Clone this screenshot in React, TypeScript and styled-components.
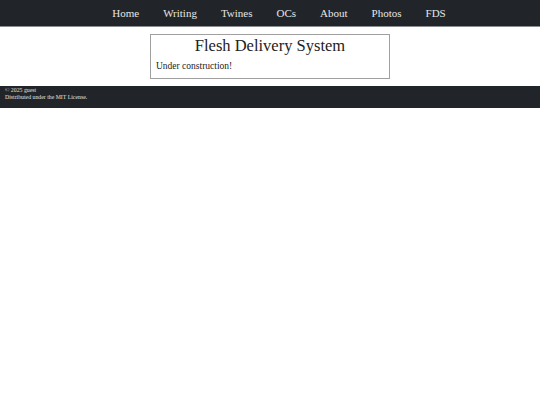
import styled, { createGlobalStyle } from 'styled-components'

const NAV_ITEMS = ['Home', 'Writing', 'Twines', 'OCs', 'About', 'Photos', 'FDS']

export default function App() {
  return (
    <>
      <GlobalStyle />
      <NavBar>
        {NAV_ITEMS.map(item => (
          <NavLink key={item} href="#">{item}</NavLink>
        ))}
      </NavBar>
      <Main>
        <Panel>
          <Title>Flesh Delivery System</Title>
          <Text>Under construction!</Text>
        </Panel>
      </Main>
      <Footer>
        <FootLine>© 2025 guest</FootLine>
        <FootLine>Distributed under the MIT License.</FootLine>
      </Footer>
    </>
  )
}

const GlobalStyle = createGlobalStyle`
  html, body {
    margin:0;
    padding:0;
    background:#fff;
    font-family:"Liberation Serif", "DejaVu Serif", serif;
  }
`

const NavBar = styled.nav`
  height:26px;
  background:#212529;
  border-bottom:1px solid #8a8d90;
  display:flex;
  justify-content:center;
  align-items:center;
  gap:24px;
  padding-left:18px;
`

const NavLink = styled.a`
  color:#e6e6e6;
  text-decoration:none;
  font-size:11px;
  line-height:1;
`

const Main = styled.main`
  display:flex;
  justify-content:center;
  padding:7px 0 7px;
`

const Panel = styled.section`
  width:228px;
  height:43px;
  border:1px solid #a0a0a0;
  padding:0 5px;
  box-sizing:content-box;
`

const Title = styled.h1`
  margin:1px 0 0;
  text-align:center;
  font-size:16.5px;
  font-weight:400;
  color:#222;
  line-height:20px;
`

const Text = styled.p`
  margin:4px 0 0;
  font-size:9.5px;
  color:#222;
  line-height:12px;
`

const Footer = styled.footer`
  background:#212529;
  height:22px;
  padding:1px 5px 0;
  box-sizing:border-box;
  display:flex;
  flex-direction:column;
`

const FootLine = styled.div`
  color:#e0e0e0;
  font-size:5.8px;
  line-height:7px;
`
